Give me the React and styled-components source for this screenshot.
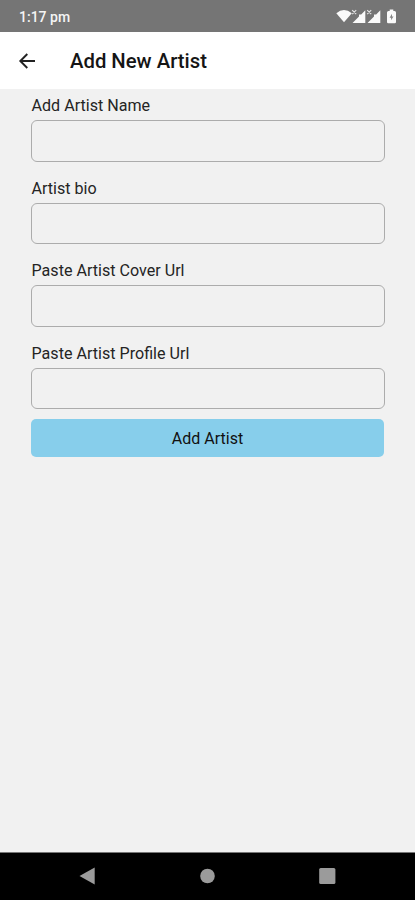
import React from "react";
import styled, { createGlobalStyle } from "styled-components";

const GlobalStyle = createGlobalStyle`
  * { box-sizing: border-box; }
  body { margin: 0; background: #f1f1f1; font-family: Roboto, "Liberation Sans", sans-serif; }
`;

const Screen = styled.div`
  display: flex;
  flex-direction: column;
  height: 900px;
  background: #f1f1f1;
`;

const StatusBar = styled.div`
  display: flex;
  align-items: center;
  justify-content: space-between;
  height: 32px;
  padding: 2px 17px 0 19px;
  background: #757575;
  color: #f4f4f4;
  flex: none;
`;

const Clock = styled.span`
  font-size: 14px;
  font-weight: 500;
  line-height: 16px;
`;

const StatusIcons = styled.svg`
  display: block;
  width: 64px;
  height: 18px;
`;

const Header = styled.header`
  display: flex;
  align-items: center;
  height: 57px;
  padding-left: 18px;
  background: #fff;
  flex: none;
`;

const BackButton = styled.button`
  display: flex;
  width: 18px;
  height: 18px;
  padding: 0;
  border: 0;
  background: none;
`;

const Title = styled.h1`
  margin: 1px 0 0 34px;
  font-size: 20.3px;
  font-weight: 500;
  line-height: 24px;
  color: #151515;
`;

const Form = styled.main`
  flex: 1;
  padding: 7px 31px 0 31px;
`;

const Field = styled.label`
  display: block;
  height: 82.5px;
`;

const Label = styled.span`
  display: block;
  height: 24.4px;
  padding-left: 0.5px;
  font-size: 16.1px;
  line-height: 20px;
  color: #242424;
`;

const Input = styled.input`
  display: block;
  width: calc(100% + 0.5px);
  height: 41.5px;
  border: 1px solid #acacac;
  border-radius: 6px;
  background: transparent;
  outline: none;
`;

const SubmitButton = styled.button`
  display: block;
  width: 100%;
  height: 38px;
  margin-top: -7px;
  padding: 2px 0 0;
  border: 0;
  border-radius: 5px;
  background: #87ceeb;
  color: #111;
  font: 400 16px/20px Roboto, "Liberation Sans", sans-serif;
`;

const NavBar = styled.nav`
  display: flex;
  align-items: center;
  justify-content: space-between;
  height: 48px;
  padding: 0 79px 2px 78px;
  border-top: 1px solid #777;
  background: #000;
  flex: none;
`;

const NavIcon = styled.svg`
  display: block;
  width: 18px;
  height: 18px;
  fill: #9b9b9b;
`;

const fields = ["Add Artist Name", "Artist bio", "Paste Artist Cover Url", "Paste Artist Profile Url"];

export default function App() {
  return (
    <Screen>
      <GlobalStyle />
      <StatusBar>
        <Clock>1:17 pm</Clock>
        <StatusIcons viewBox="0 0 64 18" fill="#fafafa">
          <path d="M2.3 5.200 Q10 -1 17.800 5.200 L10 14.300Z" />
          <path d="M31.300 2.300V14.900H18.500L25 8.500V6.500H27.200z" />
          <path d="M46.300 2.300V14.900H33.500L40 8.500V6.500H42.200z" />
          <path d="M18.2 2.100l4 4m0-4l-4 4M33.200 2.100l4 4m0-4l-4 4" stroke="#e2e2e2" strokeWidth="1.2" />
          <path d="M55.700 1.500h3.600V3H60.500q1.500 0 1.500 1.500V14q0 1.300-1.300 1.300H54.300Q53 15.300 53 14V4.500Q53 3 54.500 3H55.700z" />
          <path d="M58 5.800L55.600 9.700h1.500v2.600L59.500 8.500H58z" fill="#858585" />
        </StatusIcons>
      </StatusBar>
      <Header>
        <BackButton aria-label="Back">
          <svg width="18" height="18" viewBox="0 0 18 18" fill="none" stroke="#222" strokeWidth="1.9">
            <path d="M17 9H2.500M9.300 2L2.300 9l7 7" />
          </svg>
        </BackButton>
        <Title>Add New Artist</Title>
      </Header>
      <Form>
        {fields.map((name) => (
          <Field key={name}>
            <Label>{name}</Label>
            <Input type="text" />
          </Field>
        ))}
        <SubmitButton type="button">Add Artist</SubmitButton>
      </Form>
      <NavBar>
        <NavIcon viewBox="0 0 18 18"><path d="M1.500 9L16.700 .5v17z" /></NavIcon>
        <NavIcon viewBox="0 0 18 18"><circle cx="9.500" cy="9" r="7.300" /></NavIcon>
        <NavIcon viewBox="0 0 18 18"><rect x="1.200" y=".9" width="16.200" height="16.200" rx="1.500" /></NavIcon>
      </NavBar>
    </Screen>
  );
}
